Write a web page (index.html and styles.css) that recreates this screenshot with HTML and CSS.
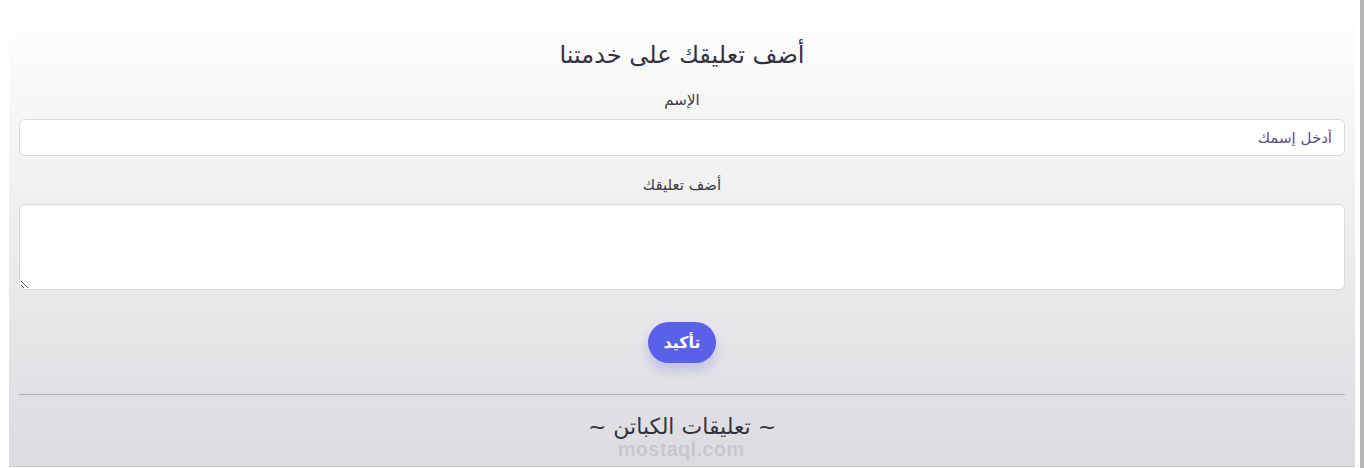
FILE: index.html
```html
<!DOCTYPE html>
<html lang="ar">
<head>
<meta charset="utf-8">
<title>أضف تعليقك</title>
<link rel="stylesheet" href="styles.css">
</head>
<body>
<div class="page">
  <form class="feedback" dir="rtl">
    <h2 class="title">أضف تعليقك على خدمتنا</h2>
    <label class="label" for="name">الإسم</label>
    <input class="field" id="name" type="text" placeholder="أدخل إسمك">
    <label class="label label-comment" for="comment">أضف تعليقك</label>
    <textarea class="field area" id="comment"></textarea>
    <div class="actions"><button type="button" class="btn">تأكيد</button></div>
  </form>
  <hr class="rule">
  <h3 class="subtitle" dir="rtl">~ تعليقات الكباتن ~</h3>
  <div class="watermark">mostaql.com</div>
</div>
<div class="strip"></div>
</body>
</html>
```

FILE: styles.css
```css
html, body {
  margin: 0;
  padding: 0;
  height: 468px;
  overflow: hidden;
  background: #ffffff;
}
body {
  display: flex;
  font-family: "DejaVu Sans", "Noto Sans", sans-serif;
}
.page {
  position: relative;
  margin-left: 9px;
  width: 1346px;
  height: 467px;
  box-sizing: border-box;
  padding: 0 10px;
  background: linear-gradient(to bottom, #ffffff 0%, #f3f3f5 35%, #e6e6e9 70%, #dcdce0 100%);
  border-bottom: 1px solid #c9c9cc;
}
.strip {
  margin-left: 5px;
  width: 4px;
  height: 468px;
  background: #b3b3b3;
}
.feedback {
  display: flex;
  flex-direction: column;
  align-items: stretch;
}
.title {
  margin: 38px 0 0;
  text-align: center;
  font-size: 24px;
  font-weight: 400;
  line-height: 34px;
  color: #33333f;
}
.label {
  margin-top: 18px;
  text-align: center;
  font-size: 15px;
  line-height: 20px;
  color: #3b3b45;
}
.label-comment {
  margin-top: 19px;
}
.field {
  margin-top: 9px;
  box-sizing: border-box;
  width: 100%;
  height: 37px;
  padding: 6px 12px;
  border: 1px solid #dadade;
  border-radius: 6px;
  background: #ffffff;
  font-family: inherit;
  font-size: 15px;
  color: #333;
  outline: none;
}
.field::placeholder {
  color: #5a4f86;
}
.area {
  height: 86px;
  resize: vertical;
}
.actions {
  display: flex;
  justify-content: center;
  margin-top: 32px;
}
.btn {
  width: 68px;
  height: 41px;
  border: none;
  border-radius: 21px;
  background: #5b60e9;
  color: #ffffff;
  font-family: inherit;
  font-size: 16px;
  font-weight: 700;
  box-shadow: 0 7px 12px rgba(91, 96, 233, 0.28);
}
.rule {
  margin: 31px 0 0;
  border: none;
  border-top: 1px solid #b2b2b5;
  height: 0;
}
.subtitle {
  margin: 15px 0 0;
  text-align: center;
  font-size: 22px;
  font-weight: 400;
  line-height: 34px;
  color: #33333f;
}
.watermark {
  position: absolute;
  left: 602px;
  top: 438px;
  width: 140px;
  text-align: center;
  font-family: "Liberation Sans", sans-serif;
  font-size: 20px;
  font-weight: 700;
  line-height: 22px;
  letter-spacing: 0.3px;
  color: rgba(120, 120, 125, 0.22);
  pointer-events: none;
}
```
